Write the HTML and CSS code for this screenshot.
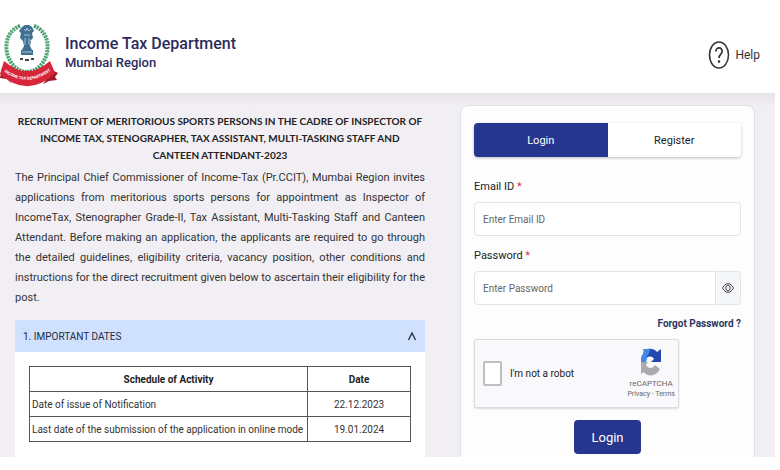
FILE: index.html
```html
<!DOCTYPE html>
<html lang="en">
<head>
<meta charset="utf-8">
<meta name="viewport" content="width=device-width, initial-scale=1">
<title>Income Tax Department – Mumbai Region</title>
<link rel="stylesheet" href="styles.css">
</head>
<body>
<header class="site-header">
  <svg class="emblem" viewBox="0 0 58 64" role="img" aria-label="Income Tax Department emblem">
    <g fill="none" stroke="#3f9a68">
      <path d="M20 3C5 8 2 29 13 42C17 47 23 49 27 49" stroke-width="4" stroke-dasharray="2 1"/>
      <path d="M34 3C49 8 52 29 41 42C37 47 31 49 27 49" stroke-width="4" stroke-dasharray="2 1"/>
      <path d="M18 3C4 10 2 29 13 42M36 3C50 10 52 29 41 42" stroke="#78bd94" stroke-width="1"/>
    </g>
    <g fill="#3f6f93">
      <path d="M22 4l3-2h4l3 2 2 4-2 2 1 5-3 3h-7l-3-3 1-5-2-2z"/>
      <path d="M23 18h8l-1 5 2 4H22l2-4zM21 27h12v5H21z"/>
    </g>
    <path d="M24 6l2 2 1-3 2 3 2-2M24 12h6M25 15v7M29 15v7M22 29h10" fill="none" stroke="#a9c4d6"/>
    <path d="M20 36h3M25 37h4M31 36h3" stroke="#444" stroke-width="2"/>
    <path d="M2 45L0 55l7 1 5 5zM52 47l6 3-3 4 2 3-8 1-6 3z" fill="#a51c2b"/>
    <path d="M4 38Q27 58 50 38L55 50Q28 76 0 51Z" fill="#d7263a"/>
    <path id="ribbon" d="M2 47Q27 67 53 46" fill="none"/>
    <text class="ribbon-text" text-anchor="middle"><textPath href="#ribbon" startOffset="50%">INCOME TAX DEPARTMENT</textPath></text>
  </svg>
  <div class="brand">
    <h1 class="brand-name">Income Tax Department</h1>
    <p class="brand-region">Mumbai Region</p>
  </div>
  <a class="help" href="#help">
    <svg class="help-icon" viewBox="0 0 22 30" aria-hidden="true">
      <ellipse cx="11" cy="15" rx="9.5" ry="13" fill="none" stroke="#333" stroke-width="1.5"/>
      <path d="M7.8 11.5C7.8 6.5 14.5 7 14.2 11.3C14 14.4 11 14.4 11 18" fill="none" stroke="#333" stroke-width="1.7"/>
      <ellipse cx="11" cy="21.6" rx="1.2" ry="1.4" fill="#333"/>
    </svg>
    <span>Help</span>
  </a>
</header>

<main class="page">
  <section class="notice">
    <h2 class="notice-title">RECRUITMENT OF MERITORIOUS SPORTS PERSONS IN THE CADRE OF INSPECTOR OF<br>INCOME TAX, STENOGRAPHER, TAX ASSISTANT, MULTI-TASKING STAFF AND<br>CANTEEN ATTENDANT-2023</h2>
    <p class="notice-text">The Principal Chief Commissioner of Income-Tax (Pr.CCIT), Mumbai Region invites applications from meritorious sports persons for appointment as Inspector of IncomeTax, Stenographer Grade-II, Tax Assistant, Multi-Tasking Staff and Canteen Attendant. Before making an application, the applicants are required to go through the detailed guidelines, eligibility criteria, vacancy position, other conditions and instructions for the direct recruitment given below to ascertain their eligibility for the post.</p>
    <div class="accordion">
      <button class="accordion-head" type="button" aria-expanded="true">
        <span>1. IMPORTANT DATES</span>
        <svg class="chevron" viewBox="0 0 10 10" aria-hidden="true"><path d="M1.5 9L5 2L8.500 9" fill="none" stroke="#222b45" stroke-width="1.3"/></svg>
      </button>
      <div class="accordion-body">
        <table class="dates">
          <thead><tr><th class="activity">Schedule of Activity</th><th>Date</th></tr></thead>
          <tbody>
            <tr><td>Date of issue of Notification</td><td class="date">22.12.2023</td></tr>
            <tr><td>Last date of the submission of the application in online mode</td><td class="date">19.01.2024</td></tr>
          </tbody>
        </table>
      </div>
    </div>
  </section>

  <form class="card">
    <div class="tabs">
      <button class="tab tab-active" type="button">Login</button>
      <button class="tab" type="button">Register</button>
    </div>
    <label class="label" for="email">Email ID <span class="required">*</span></label>
    <input class="input" id="email" type="email" placeholder="Enter Email ID">
    <label class="label" for="password">Password <span class="required">*</span></label>
    <div class="password">
      <input class="input password-input" id="password" type="password" placeholder="Enter Password">
      <button class="reveal" type="button" aria-label="Show password">
        <svg class="eye" viewBox="0 0 12 12" aria-hidden="true" fill="none" stroke="#444" stroke-width="1"><path d="M.7 6C3 .2 9 .2 11.300 6C9 11.800 3 11.800 .7 6Z"/><ellipse cx="6" cy="6" rx="2.200" ry="2.800"/></svg>
      </button>
    </div>
    <a class="forgot" href="#forgot">Forgot Password ?</a>
    <div class="captcha">
      <input class="captcha-box" id="robot" type="checkbox">
      <label class="captcha-label" for="robot">I'm not a robot</label>
      <div class="captcha-brand">
        <svg class="captcha-logo" viewBox="0 0 22 28" aria-hidden="true">
          <path d="M5 2C8 0 14 0 17 4L21 1V14H11L14 11C12 8 9 8 7 10L3 5Z" fill="#2548ad"/>
          <path d="M3 1H10L9 6C7 7 6 9 7 11L6 14H1C1 10 1 7 4 5Z" fill="#438ae6"/>
          <path d="M1 14H8L6 17C8 21 13 21 15 17L20 21C16 29 7 29 4 24L1 26Z" fill="#ababaf"/>
        </svg>
        <span class="captcha-name">reCAPTCHA</span>
        <span class="captcha-links"><a href="#privacy">Privacy</a> - <a href="#terms">Terms</a></span>
      </div>
    </div>
    <button class="submit" type="submit">Login</button>
  </form>
</main>
</body>
</html>
```
FILE: styles.css
```css
* { box-sizing: border-box; }
body { margin: 0; background: #fff; color: #333; font-family: Roboto, "Liberation Sans", sans-serif; font-size: 10px; }
h1, h2, p { margin: 0; }
button, input { font: inherit; color: inherit; }
a { color: inherit; text-decoration: none; }

.site-header { display: flex; align-items: center; height: 93px; padding: 16px 15px 0 0; margin-right: 5px; }
.emblem { width: 58px; height: 64px; margin-right: 7px; }
.ribbon-text { font: 700 4px Roboto, sans-serif; fill: #fff; }
.brand { padding-bottom: 4px; color: #2b2c5c; }
.brand-name { font-size: 16px; font-weight: 500; line-height: 20px; }
.brand-region { font-size: 13px; font-weight: 500; line-height: 18px; }
.help { display: flex; align-items: center; gap: 5px; margin-left: auto; font-size: 12px; }
.help-icon { width: 22px; height: 30px; }

.page { display: grid; grid-template-columns: minmax(0, 410fr) minmax(0, 295fr); gap: 35px; margin-right: 5px; padding: 12px 20px 0 15px; background: linear-gradient(#e6e4e8, #f1eff3 14px); }

.notice { display: flex; flex-direction: column; }
.notice-title { margin-top: 8px; color: #222; font-family: Lato, Roboto, sans-serif; font-size: 10px; font-weight: 700; line-height: 17px; text-align: center; }
.notice-text { margin: 4px 0 12px; font-size: 11px; line-height: 20px; text-align: justify; }
.accordion { display: flex; flex: 1; flex-direction: column; background: #fff; }
.accordion-head { display: flex; align-items: center; justify-content: space-between; width: 100%; height: 32px; padding: 0 8px; border: 0; background: #d0e1fd; color: #222b45; }
.chevron { width: 10px; height: 10px; }
.accordion-body { padding: 14px; }
.dates { width: 100%; border-collapse: collapse; }
.dates th, .dates td { height: 25px; padding: 0 2px; border: 1px solid #555; }
.dates th { color: #222; }
.activity { width: 73%; }
.date { text-align: center; }

.card { display: flex; flex-direction: column; padding: 17px 13px 3px; border: 1px solid #e2e0e6; border-bottom: 0; border-radius: 8px 8px 0 0; background: #fdfdfe; }
.tabs { display: flex; height: 34px; margin-bottom: 20px; border-radius: 4px; box-shadow: 0 1px 3px #bbb; overflow: hidden; }
.tab { flex: 1; border: 0; background: #fff; color: #222; font-size: 11px; }
.tab-active { background: #26358d; color: #fff; }
.label { margin-bottom: 5px; color: #222; font-size: 11px; line-height: 20px; }
.required { color: #d9364a; }
.input { width: 100%; height: 34px; margin-bottom: 10px; padding: 0 8px; border: 1px solid #e3e3e8; border-radius: 4px; background: #fff; }
.input::placeholder { color: #666; }
.password { display: flex; margin-bottom: 10px; }
.password-input { margin: 0; border-radius: 4px 0 0 4px; }
.reveal { display: grid; place-items: center; width: 28px; padding: 0; border: 1px solid #e3e3e8; border-left: 0; border-radius: 0 4px 4px 0; background: #f6f7fb; }
.eye { width: 12px; height: 12px; }
.forgot { align-self: flex-end; color: #2d3561; font-weight: 700; line-height: 18px; }
.captcha { display: flex; align-items: center; width: 205px; height: 69px; margin: 6px 0 12px; padding: 0 3px 0 8px; border: 1px solid #dcdce0; border-radius: 2px; background: #f9f9fb; box-shadow: 0 1px 2px #ddd; }
.captcha-box { appearance: none; width: 19px; height: 25px; margin: 0 8px 0 0; border: 2px solid #bfbfc2; border-radius: 2px; background: #fff; }
.captcha-label { color: #222; }
.captcha-brand { display: flex; flex-direction: column; align-items: center; margin-left: auto; color: #666; }
.captcha-logo { width: 22px; height: 28px; margin-bottom: 3px; }
.captcha-name { font-size: 8px; line-height: 10px; }
.captcha-links { font-size: 7px; line-height: 10px; }
.submit { align-self: center; width: 67px; height: 34px; border: 0; border-radius: 4px; background: #26358d; color: #fff; font-size: 13px; }
```
